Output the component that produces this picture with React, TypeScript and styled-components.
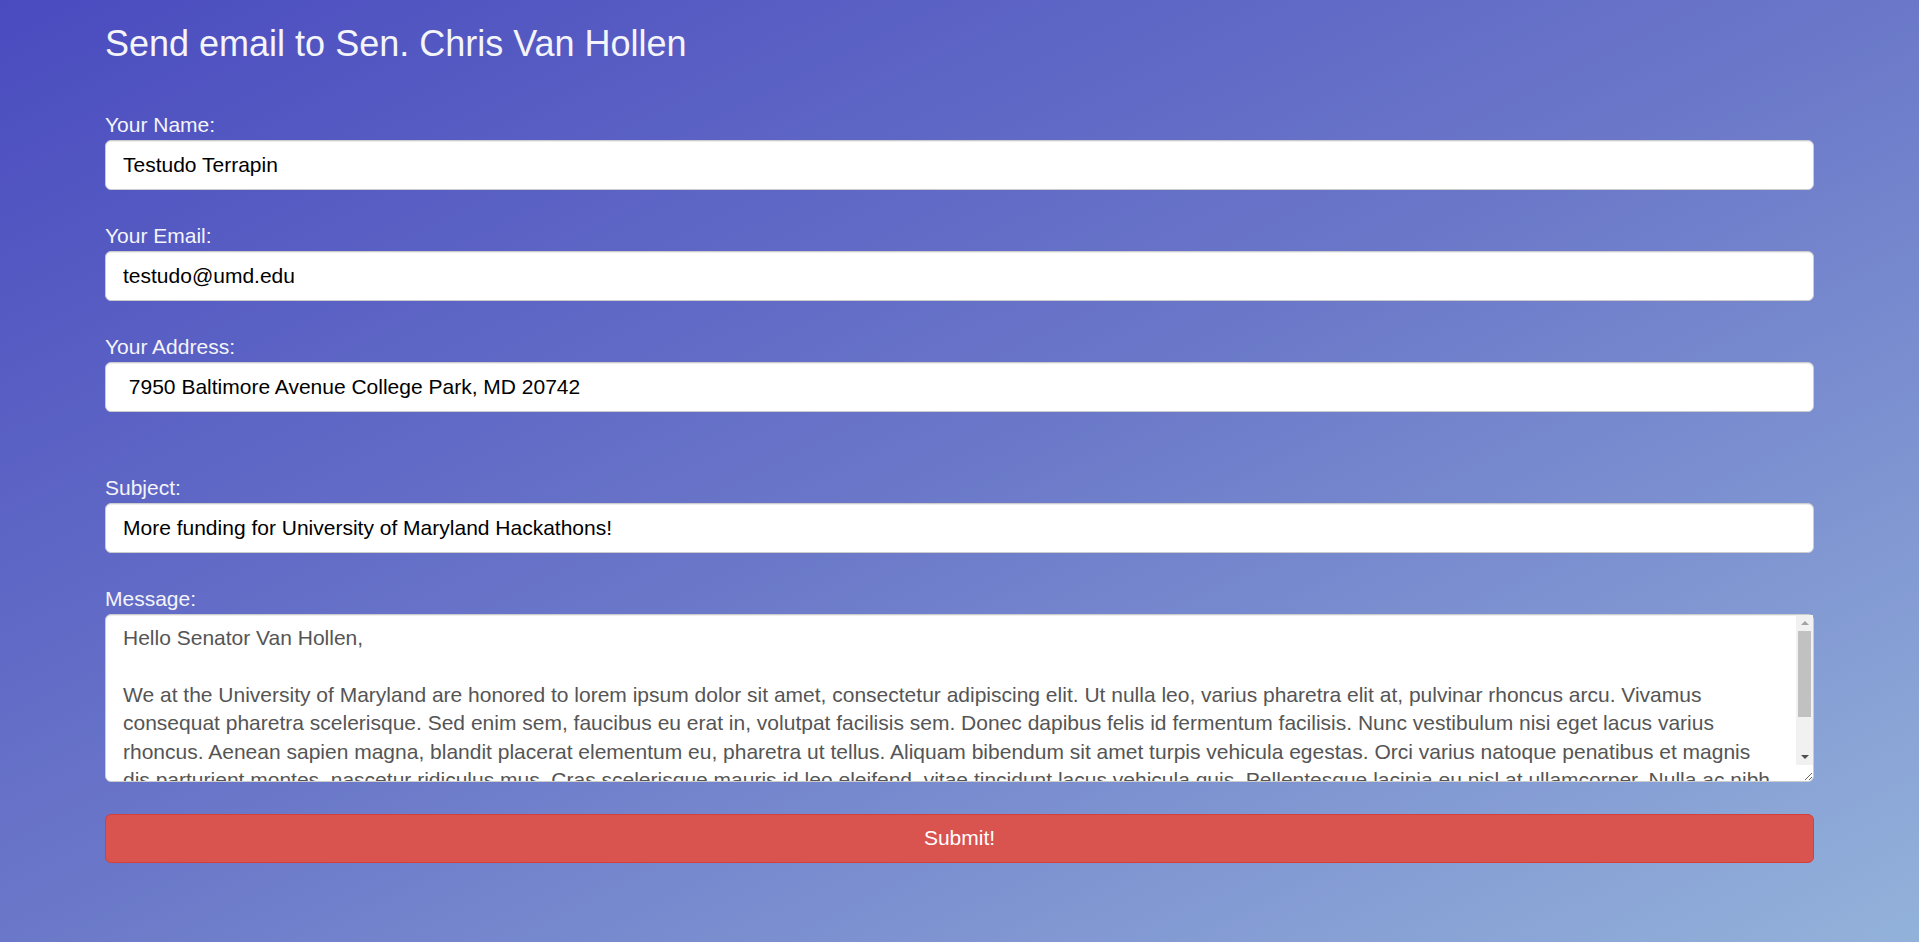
import React from 'react';
import styled, { createGlobalStyle } from 'styled-components';

const GlobalStyle = createGlobalStyle`
  html, body {
    margin: 0;
    padding: 0;
  }
  body {
    min-height: 100vh;
    background: linear-gradient(to bottom right, #4a4bbf 0%, #6b78c9 50%, #93b2da 100%);
    background-attachment: fixed;
    font-family: "Liberation Sans", Arial, sans-serif;
  }
  * {
    box-sizing: border-box;
  }
`;

const Page = styled.div`
  min-height: 100vh;
  padding: 0 105px 40px;
`;

const Title = styled.h1`
  margin: 24px 0 49px;
  font-size: 36px;
  line-height: 1.1;
  font-weight: 400;
  color: #f4f4fb;
`;

const FormGroup = styled.div<{ $extraGap?: boolean }>`
  margin-bottom: ${p => (p.$extraGap ? 64 : 34)}px;
`;

const Label = styled.label`
  display: block;
  font-size: 21px;
  line-height: 24px;
  margin-bottom: 3px;
  color: #f4f4fb;
`;

const Input = styled.input`
  display: block;
  width: 100%;
  height: 50px;
  padding: 0 17px;
  font-family: "Liberation Sans", Arial, sans-serif;
  font-size: 21px;
  color: #000;
  background: #fff;
  border: 1px solid #ccc;
  border-radius: 6px;
  box-shadow: inset 0 1px 1px rgba(0, 0, 0, 0.075);
  outline: none;
`;

const TextAreaWrap = styled.div`
  position: relative;
`;

const TextArea = styled.textarea`
  display: block;
  width: 100%;
  height: 168px;
  padding: 9px 34px 9px 17px;
  font-family: "Liberation Sans", Arial, sans-serif;
  font-size: 21px;
  line-height: 28.5px;
  color: #555;
  background: #fff;
  border: 1px solid #ccc;
  border-radius: 6px;
  box-shadow: inset 0 1px 1px rgba(0, 0, 0, 0.075);
  outline: none;
  resize: vertical;
  overflow: hidden;
`;

/* native-looking scrollbar drawn over the textarea's right edge */
const ScrollTrack = styled.div`
  position: absolute;
  top: 1px;
  right: 1px;
  width: 17px;
  height: 150px;
  background: #f1f1f1;
  display: flex;
  flex-direction: column;
  align-items: center;
  pointer-events: none;
`;

const ScrollButton = styled.div<{ $down?: boolean }>`
  flex: 0 0 16px;
  width: 100%;
  display: flex;
  align-items: center;
  justify-content: center;

  &::after {
    content: '';
    width: 0;
    height: 0;
    border-left: 4px solid transparent;
    border-right: 4px solid transparent;
    ${p =>
      p.$down
        ? 'border-top: 4px solid #505050;'
        : 'border-bottom: 4px solid #a3a3a3;'}
  }
`;

const ScrollThumb = styled.div`
  flex: 0 0 86px;
  width: 13px;
  background: #c1c1c1;
`;

const ScrollSpacer = styled.div`
  flex: 1;
`;

const SubmitButton = styled.button`
  display: block;
  width: 100%;
  height: 49px;
  margin-top: 32px;
  font-family: "Liberation Sans", Arial, sans-serif;
  font-size: 21px;
  color: #fff;
  background: #d9534f;
  border: 1px solid #d43f3a;
  border-radius: 6px;
  cursor: pointer;
`;

const message = `Hello Senator Van Hollen,

We at the University of Maryland are honored to lorem ipsum dolor sit amet, consectetur adipiscing elit. Ut nulla leo, varius pharetra elit at, pulvinar rhoncus arcu. Vivamus consequat pharetra scelerisque. Sed enim sem, faucibus eu erat in, volutpat facilisis sem. Donec dapibus felis id fermentum facilisis. Nunc vestibulum nisi eget lacus varius rhoncus. Aenean sapien magna, blandit placerat elementum eu, pharetra ut tellus. Aliquam bibendum sit amet turpis vehicula egestas. Orci varius natoque penatibus et magnis dis parturient montes, nascetur ridiculus mus. Cras scelerisque mauris id leo eleifend, vitae tincidunt lacus vehicula quis. Pellentesque lacinia eu nisl at ullamcorper. Nulla ac nibh.

Thank you,
Testudo Terrapin`;

export default function App() {
  return (
    <>
      <GlobalStyle />
      <Page>
        <Title>Send email to Sen. Chris Van Hollen</Title>
        <form onSubmit={e => e.preventDefault()}>
          <FormGroup>
            <Label>Your Name:</Label>
            <Input type="text" defaultValue="Testudo Terrapin" />
          </FormGroup>
          <FormGroup>
            <Label>Your Email:</Label>
            <Input type="email" defaultValue="testudo@umd.edu" />
          </FormGroup>
          <FormGroup $extraGap>
            <Label>Your Address:</Label>
            <Input type="text" defaultValue=" 7950 Baltimore Avenue College Park, MD 20742" />
          </FormGroup>
          <FormGroup>
            <Label>Subject:</Label>
            <Input type="text" defaultValue="More funding for University of Maryland Hackathons!" />
          </FormGroup>
          <div>
            <Label>Message:</Label>
            <TextAreaWrap>
              <TextArea defaultValue={message} />
              <ScrollTrack>
                <ScrollButton />
                <ScrollThumb />
                <ScrollSpacer />
                <ScrollButton $down />
              </ScrollTrack>
            </TextAreaWrap>
          </div>
          <SubmitButton type="submit">Submit!</SubmitButton>
        </form>
      </Page>
    </>
  );
}
